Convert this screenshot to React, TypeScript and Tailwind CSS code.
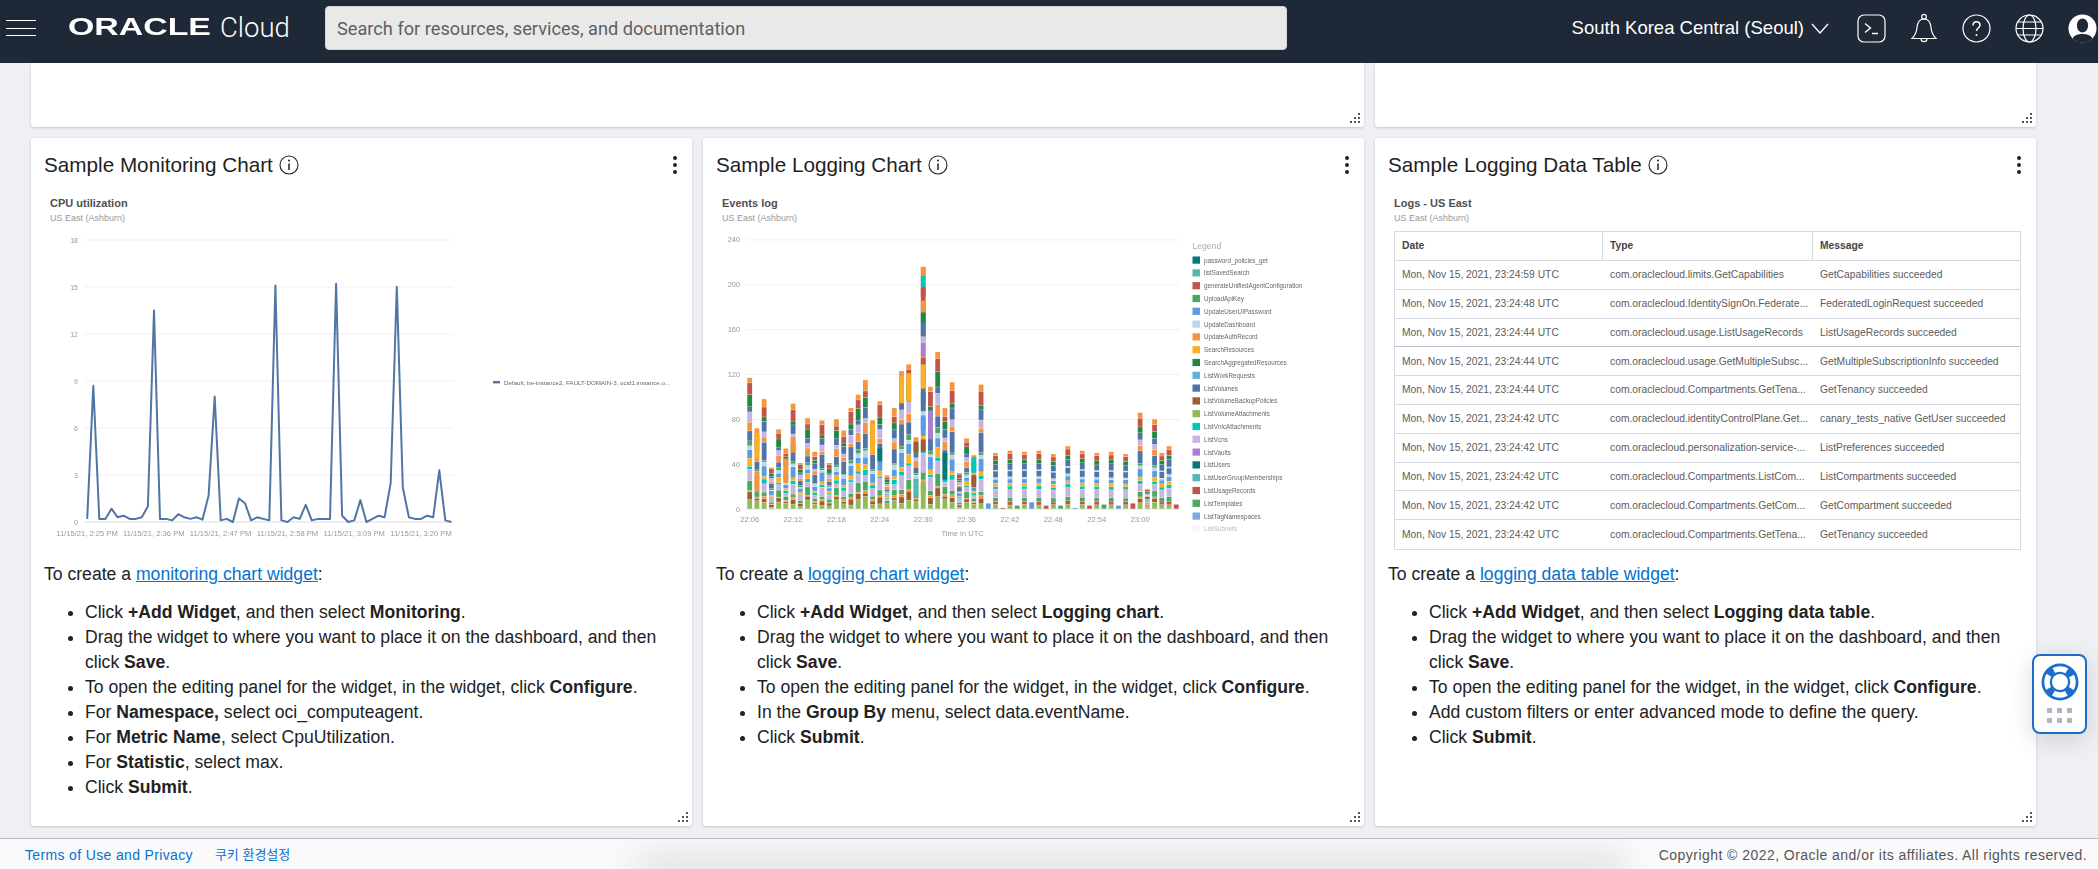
import type { ReactNode } from "react";

const cpu = [
  0.2, 8.7, 0.2, 0.2, 0.85, 0.3, 0.4, 0.2, 0.2, 0.3, 1.0, 13.5, 0.2, 0.2, 0.1, 0.5, 0.3, 0.2, 0.3, 0.15, 1.7,
  8.0, 0.1, 0.2, 0, 1.5, 1.2, 0.1, 0.3, 0.2, 0.1, 15.1, 0.1, 0, 0.3, 0.2, 1.1, 0.1, 0.2, 0.2, 0.2, 15.2, 0.4, 0,
  0.1, 1.4, 0, 0.2, 0.4, 0.3, 2.5, 15, 2.2, 0.3, 0.2, 0.2, 0.4, 0.3, 3.3, 0.1, 0,
];

const c = {
  teal: "#007a72",
  mint: "#55b8ad",
  red: "#c0564a",
  green: "#4aa85f",
  blue: "#5b9be0",
  pale: "#b8d7ec",
  orange: "#f79440",
  amber: "#fdb022",
  forest: "#1f8a3d",
  sky: "#63b2dc",
  steel: "#4f74a8",
  brown: "#a05a34",
  lime: "#90bc58",
  cyan: "#00c8b4",
  lav: "#c8b4e2",
  purple: "#a97fd6",
};

const legend: [string, string][] = [
  ["password_policies_get", c.teal],
  ["listSavedSearch", c.mint],
  ["generateUnifiedAgentConfiguration", c.red],
  ["UploadApiKey", c.green],
  ["UpdateUserUIPassword", c.blue],
  ["UpdateDashboard", c.pale],
  ["UpdateAuthRecord", c.orange],
  ["SearchResources", c.amber],
  ["SearchAggregatedResources", c.forest],
  ["ListWorkRequests", c.sky],
  ["ListVolumes", c.steel],
  ["ListVolumeBackupPolicies", c.brown],
  ["ListVolumeAttachments", c.lime],
  ["ListVnicAttachments", c.cyan],
  ["ListVcns", c.lav],
  ["ListVaults", c.purple],
  ["ListUsers", c.teal],
  ["ListUserGroupMemberships", c.mint],
  ["ListUsageRecords", c.red],
  ["ListTemplates", c.green],
  ["ListTagNamespaces", "#7aa9e3"],
  ["ListSubnets", "#e6f0f9"],
];

const totals = [
  117, 72, 98, 37, 71, 54, 94, 41, 81, 51, 79, 41, 80, 70, 90, 102, 115, 79, 96, 30, 90, 123, 129, 64, 216, 109, 140,
  90, 113, 32, 63, 48, 111, 5, 50, 1, 52, 3, 51, 6, 52, 3, 49, 3, 56, 1, 52, 3, 50, 4, 51, 3, 49, 5, 86, 18, 80, 50,
  56, 4,
];

const busy: [string, number][] = [
  [c.lime, 8],
  [c.brown, 5],
  [c.orange, 2],
  [c.green, 7],
  [c.lav, 9],
  [c.cyan, 4],
  [c.amber, 5],
  [c.blue, 9],
  [c.pale, 4],
  [c.green, 3],
  [c.steel, 14],
  [c.orange, 7],
  [c.lav, 7],
  [c.steel, 8],
  [c.forest, 8],
  [c.red, 10],
  [c.orange, 7],
];

const regular: [string, number][] = [
  [c.lime, 4],
  [c.red, 3],
  [c.green, 4],
  [c.lav, 8],
  [c.cyan, 3],
  [c.amber, 3],
  [c.blue, 4],
  [c.pale, 2],
  [c.steel, 6],
  [c.pale, 1],
  [c.steel, 6],
  [c.forest, 4],
  [c.red, 5],
  [c.orange, 3],
];

// hand picked big blocks: bar, colour, from, to
const overlays: [number, string, number, number][] = [
  [1, c.amber, 45, 68],
  [1, c.orange, 15, 33],
  [5, c.orange, 23, 45],
  [6, c.orange, 50, 64],
  [17, c.amber, 50, 76],
  [18, c.teal, 42, 54],
  [21, c.amber, 94, 118],
  [22, c.amber, 96, 121],
  [23, c.mint, 10, 27],
  [23, c.brown, 50, 60],
  [24, c.orange, 208, 216],
  [24, c.cyan, 198, 208],
  [24, c.red, 189, 197],
  [24, c.orange, 175, 186],
  [24, c.forest, 166, 175],
  [24, c.steel, 154, 166],
  [24, c.lav, 148, 154],
  [24, c.purple, 136, 148],
  [24, c.red, 129, 135],
  [24, c.amber, 107, 129],
  [24, c.steel, 87, 104],
  [24, c.blue, 70, 81],
  [24, c.brown, 51, 62],
  [24, c.lav, 32, 44],
  [24, c.lime, 12, 24],
  [25, c.purple, 62, 88],
  [27, c.teal, 26, 50],
  [31, c.cyan, 32, 46],
  [31, c.brown, 19, 30],
];

function InfoIcon() {
  return (
    <svg width="20" height="20" viewBox="0 0 20 20" fill="none" className="shrink-0">
      <circle cx="10" cy="10" r="9" stroke="#222" strokeWidth="1.1" />
      <circle cx="10" cy="5.6" r="1" fill="#222" />
      <path d="M10 8.4v6.6" stroke="#222" strokeWidth="1.5" />
    </svg>
  );
}

function ResizeHandle() {
  return (
    <svg width="11" height="11" viewBox="0 0 11 11" fill="#555" className="absolute right-[3px] bottom-[3px]">
      <rect x="8" y="0" width="2" height="2" />
      <rect x="8" y="4" width="2" height="2" />
      <rect x="4" y="4" width="2" height="2" />
      <rect x="8" y="8" width="2" height="2" />
      <rect x="4" y="8" width="2" height="2" />
      <rect x="0" y="8" width="2" height="2" />
    </svg>
  );
}

function ChartHead({ title }: { title: string }) {
  return (
    <div className="pt-[4px] pb-[1px] pl-[19px]">
      <div className="text-[11px] leading-[15px] font-bold text-[#4f4f4f]">{title}</div>
      <div className="text-[9px] leading-[14px] text-[#9a9a9a]">US East (Ashburn)</div>
    </div>
  );
}

function CpuChart() {
  const points = cpu.map((v, i) => `${(56.2 + i * 6.07).toFixed(1)},${(296 - v * 15.67).toFixed(1)}`).join(" ");
  const labels = ["2:25", "2:36", "2:47", "2:58", "3:09", "3:20"];
  return (
    <svg width="661" height="330" viewBox="0 0 661 330" className="blur-[0.3px]" fontFamily="Liberation Sans">
      {[18, 15, 12, 9, 6, 3, 0].map((v, i) => (
        <g key={v}>
          <line x1="53" x2="422" y1={14 + i * 47} y2={14 + i * 47} stroke={v === 0 ? "#dddddd" : "#f1f1f1"} />
          <text x="47" y={16.5 + i * 47} fontSize="7" fill="#999" textAnchor="end">
            {v}
          </text>
        </g>
      ))}
      {labels.map((l, i) => (
        <text key={l} x={56 + i * 66.8} y="310" fontSize="7.6" fill="#999" textAnchor="middle">
          11/15/21, {l} PM
        </text>
      ))}
      <polyline points={points} fill="none" stroke="#4f76a5" strokeWidth="2" strokeLinejoin="round" />
      <rect x="462" y="155" width="7" height="2.4" fill="#4f76a5" />
      <text x="473" y="159" fontSize="6.2" fill="#666">
        Default, be-instance2, FAULT-DOMAIN-3, ocid1.instance.o...
      </text>
    </svg>
  );
}

function stack(i: number, total: number) {
  const tpl = i >= 33 && total > 30 && total < 60 ? regular : busy;
  if (total <= 6) {
    const col = [c.blue, c.green, c.red][i % 3];
    return [{ color: col, from: 0, to: total }];
  }
  const w = tpl.map(([, n], j) => n * (1 + (i >= 33 ? 0.1 : 0.45) * Math.sin(i * 1.7 + j * 2.3)));
  const sum = w.reduce((a, b) => a + b, 0);
  let at = 0;
  return tpl.map(([color], j) => {
    const from = at;
    at += (w[j] / sum) * total;
    return { color, from, to: at };
  });
}

function EventsChart() {
  const y = (v: number) => 283 - v * 1.121;
  const barX = (i: number) => 46.7 + i * 7.23;
  return (
    <svg width="661" height="330" viewBox="0 0 661 330" className="blur-[0.3px]" fontFamily="Liberation Sans">
      {[240, 200, 160, 120, 80, 40, 0].map((v) => (
        <g key={v}>
          <line x1="43" x2="477" y1={y(v)} y2={y(v)} stroke={v === 0 ? "#dddddd" : "#f1f1f1"} />
          <text x="37" y={y(v) + 2.5} fontSize="7.4" fill="#999" textAnchor="end">
            {v}
          </text>
        </g>
      ))}
      {totals.map((total, i) => (
        <g key={i}>
          {stack(i, total).map((s, j) => (
            <rect
              key={j}
              x={barX(i) - 2.4}
              y={y(s.to)}
              width="4.8"
              height={Math.max((s.to - s.from) * 1.121 - 0.3, 0.6)}
              fill={s.color}
            />
          ))}
        </g>
      ))}
      {overlays.map(([i, color, from, to], k) => (
        <rect key={k} x={barX(i) - 2.4} y={y(to)} width="4.8" height={(to - from) * 1.121 - 0.3} fill={color} />
      ))}
      {["22:06", "22:12", "22:18", "22:24", "22:30", "22:36", "22:42", "22:48", "22:54", "23:00"].map((l, i) => (
        <text key={l} x={46.7 + i * 43.38} y="296" fontSize="7.6" fill="#999" textAnchor="middle">
          {l}
        </text>
      ))}
      <text x="259.6" y="310" fontSize="7.6" fill="#999" textAnchor="middle">
        Time in UTC
      </text>
      <text x="489.5" y="23" fontSize="8.6" fill="#aaa">
        Legend
      </text>
      {legend.map(([name, color], i) => (
        <g key={name} opacity={i === 21 ? 0.45 : 1}>
          <rect x="489.5" y={30.5 + i * 12.8} width="7.5" height="7.2" fill={color} />
          <text x="501" y={36.6 + i * 12.8} fontSize="6.3" fill="#666">
            {name}
          </text>
        </g>
      ))}
    </svg>
  );
}

const logRows = [
  ["Mon, Nov 15, 2021, 23:24:59 UTC", "com.oraclecloud.limits.GetCapabilities", "GetCapabilities succeeded"],
  ["Mon, Nov 15, 2021, 23:24:48 UTC", "com.oraclecloud.IdentitySignOn.Federate...", "FederatedLoginRequest succeeded"],
  ["Mon, Nov 15, 2021, 23:24:44 UTC", "com.oraclecloud.usage.ListUsageRecords", "ListUsageRecords succeeded"],
  ["Mon, Nov 15, 2021, 23:24:44 UTC", "com.oraclecloud.usage.GetMultipleSubsc...", "GetMultipleSubscriptionInfo succeeded"],
  ["Mon, Nov 15, 2021, 23:24:44 UTC", "com.oraclecloud.Compartments.GetTena...", "GetTenancy succeeded"],
  ["Mon, Nov 15, 2021, 23:24:42 UTC", "com.oraclecloud.identityControlPlane.Get...", "canary_tests_native GetUser succeeded"],
  ["Mon, Nov 15, 2021, 23:24:42 UTC", "com.oraclecloud.personalization-service-...", "ListPreferences succeeded"],
  ["Mon, Nov 15, 2021, 23:24:42 UTC", "com.oraclecloud.Compartments.ListCom...", "ListCompartments succeeded"],
  ["Mon, Nov 15, 2021, 23:24:42 UTC", "com.oraclecloud.Compartments.GetCom...", "GetCompartment succeeded"],
  ["Mon, Nov 15, 2021, 23:24:42 UTC", "com.oraclecloud.Compartments.GetTena...", "GetTenancy succeeded"],
];

function LogsTable() {
  return (
    <div className="mt-[5px] mr-[15px] ml-[19px] border border-[#d5dae3] text-[10.3px] text-[#5c5c5c]">
      <div className="grid h-[29px] grid-cols-[208px_210px_1fr] items-center border-b border-[#d5dae3] font-bold text-[#444]">
        <div className="flex h-full items-center border-r border-[#d5dae3] pl-[7px]">Date</div>
        <div className="flex h-full items-center border-r border-[#d5dae3] pl-[7px]">Type</div>
        <div className="pl-[7px]">Message</div>
      </div>
      {logRows.map((row, i) => (
        <div
          key={i}
          className={`grid h-[28.8px] grid-cols-[208px_210px_1fr] items-center whitespace-nowrap ${
            i === 9 ? "" : i === 2 ? "border-b border-[#b9c0cf]" : "border-b border-[#d5dae3]"
          }`}
        >
          {row.map((cell) => (
            <div key={cell} className="pl-[7px]">
              {cell}
            </div>
          ))}
        </div>
      ))}
    </div>
  );
}

const open = "To open the editing panel for the widget, in the widget, click ";
const drag = "Drag the widget to where you want to place it on the dashboard, and then click ";

interface CardProps {
  title: string;
  chart: ReactNode;
  link: string;
  items: ReactNode[];
}

function WidgetCard({ title, chart, link, items }: CardProps) {
  return (
    <section className="relative h-[688px] rounded-[3px] bg-white shadow-[0_1px_3px_rgba(0,0,0,0.18)]">
      <div className="flex h-[54px] items-center gap-[6px] pr-[14px] pl-[13px]">
        <h2 className="text-[20.7px] leading-none font-normal text-[#1f1f1f]">{title}</h2>
        <InfoIcon />
        <svg width="6" height="20" viewBox="0 0 6 20" fill="#222" className="ml-auto">
          <circle cx="3" cy="3" r="2" />
          <circle cx="3" cy="10" r="2" />
          <circle cx="3" cy="17" r="2" />
        </svg>
      </div>
      <div className="h-[370px] overflow-hidden">{chart}</div>
      <div className="px-[13px] text-[17.6px] leading-[25px] text-[#222]">
        <p>
          To create a <a className="text-[#0572ce] underline">{link}</a>:
        </p>
        <ul className="mt-[13px] list-disc pl-[41px]">
          {items.map((item, i) => (
            <li key={i}>{item}</li>
          ))}
        </ul>
      </div>
      <ResizeHandle />
    </section>
  );
}

function HeaderIcons() {
  return (
    <div className="ml-[28px] flex items-center gap-[24px] pr-[1px] text-white">
      <svg width="29" height="29" viewBox="0 0 29 29" fill="none" stroke="currentColor" strokeWidth="1.2">
        <rect x="1" y="1" width="27" height="27" rx="6" />
        <path d="M8 9.5l5.5 4.5-5.5 4.5M15 19.5h6" strokeWidth="1.4" />
      </svg>
      <svg width="28" height="30" viewBox="0 0 28 30" fill="none" stroke="currentColor" strokeWidth="1.2">
        <path d="M2 25.5c3-3 4.500-6 5-11C7.500 9 10 6 14 6s6.500 3 7 8.500c.5 5 2 8 5 11z" />
        <circle cx="14" cy="3.700" r="2.300" />
        <path d="M11 25.700a3 3 0 0 0 6 0" />
      </svg>
      <svg width="29" height="29" viewBox="0 0 29 29" fill="none" stroke="currentColor" strokeWidth="1.200">
        <circle cx="14.500" cy="14.500" r="13.500" />
        <path d="M11 11.500c0-2.500 1.500-3.800 3.500-3.800s3.500 1.300 3.500 3.300c0 3-3.500 3-3.500 6" strokeWidth="1.500" />
        <circle cx="14.500" cy="21" r="1" fill="currentColor" stroke="none" />
      </svg>
      <svg width="29" height="29" viewBox="0 0 29 29" fill="none" stroke="currentColor" strokeWidth="1.200">
        <circle cx="14.500" cy="14.500" r="13.500" />
        <ellipse cx="14.500" cy="14.500" rx="6.500" ry="13.500" />
        <path d="M1 14.500h27M3 8h23M3 21h23" />
      </svg>
      <svg width="29" height="29" viewBox="0 0 29 29">
        <circle cx="14.500" cy="14.500" r="14" fill="#fff" />
        <ellipse cx="14.500" cy="11.500" rx="5.600" ry="7" fill="#1e2836" />
        <path d="M4.500 24.500c2-3.500 5.500-4.500 10-4.500s8 1 10 4.500a14 14 0 0 1-20 0z" fill="#1e2836" />
      </svg>
    </div>
  );
}

function HelpWidget() {
  return (
    <div className="absolute top-[654px] left-[2032px] flex h-[80px] w-[55px] flex-col items-center rounded-[8px] border-2 border-[#1b6fcb] bg-white pt-[7px] shadow-[0_6px_24px_rgba(0,0,0,0.14)]">
      <svg width="38" height="38" viewBox="0 0 38 38">
        <circle cx="19" cy="19" r="18.500" fill="#1b6fcb" />
        <circle cx="19" cy="19" r="13" fill="none" stroke="#fff" strokeWidth="5.600" strokeDasharray="13.600 6.820" strokeDashoffset="6.800" />
        <circle cx="19" cy="19" r="8" fill="#fff" />
      </svg>
      <div className="mt-[7px] grid grid-cols-3 gap-x-[5px] gap-y-[5px]">
        {[0, 1, 2, 3, 4, 5].map((n) => (
          <div key={n} className="h-[5px] w-[5px] bg-[#b0b7bf]" />
        ))}
      </div>
    </div>
  );
}

export default function App() {
  return (
    <div className="relative flex h-[869px] flex-col overflow-hidden bg-[#eef0f4] font-['Liberation_Sans',sans-serif]">
      <header className="flex h-[63px] shrink-0 items-center bg-[#1e2836] pb-[7px] text-white">
        <div className="ml-[6px] flex w-[30px] flex-col gap-[6.500px]">
          <div className="h-px bg-white" />
          <div className="h-px bg-white" />
          <div className="h-px bg-white" />
        </div>
        <div className="ml-[32px] w-[143px]">
          <span className="inline-block origin-left scale-x-[1.41] text-[24px] leading-none font-bold">ORACLE</span>
        </div>
        <span className="ml-[9px] w-[105px] font-['Roboto',sans-serif] text-[27.5px] leading-none font-light">Cloud</span>
        <input
          readOnly
          placeholder="Search for resources, services, and documentation"
          className="h-[44px] w-[962px] rounded-[4px] border border-[#d5d5d5] bg-[#e9e9e9] pl-[11px] font-['Roboto',sans-serif] text-[18.2px] placeholder:text-[#5f5f5f]"
        />
        <div className="ml-auto flex items-center gap-[7px]">
          <span className="text-[18.500px]">South Korea Central (Seoul)</span>
          <svg width="18" height="11" viewBox="0 0 18 11" fill="none" stroke="#fff" strokeWidth="1.300">
            <path d="M1 1l8 9 8-9" />
          </svg>
        </div>
        <HeaderIcons />
      </header>

      <main className="min-h-0 flex-1 pr-[62px] pl-[31px]">
        <div className="grid grid-cols-3 gap-[11px]">
          <div className="relative col-span-2 h-[64px] rounded-b-[3px] bg-white shadow-[0_1px_3px_rgba(0,0,0,0.18)]">
            <ResizeHandle />
          </div>
          <div className="relative h-[64px] rounded-b-[3px] bg-white shadow-[0_1px_3px_rgba(0,0,0,0.18)]">
            <ResizeHandle />
          </div>
          <WidgetCard
            title="Sample Monitoring Chart"
            link="monitoring chart widget"
            chart={
              <>
                <ChartHead title="CPU utilization" />
                <CpuChart />
              </>
            }
            items={[
              <>
                Click <b>+Add Widget</b>, and then select <b>Monitoring</b>.
              </>,
              <>
                {drag}
                <b>Save</b>.
              </>,
              <>
                {open}
                <b>Configure</b>.
              </>,
              <>
                For <b>Namespace,</b> select oci_computeagent.
              </>,
              <>
                For <b>Metric Name</b>, select CpuUtilization.
              </>,
              <>
                For <b>Statistic</b>, select max.
              </>,
              <>
                Click <b>Submit</b>.
              </>,
            ]}
          />
          <WidgetCard
            title="Sample Logging Chart"
            link="logging chart widget"
            chart={
              <>
                <ChartHead title="Events log" />
                <EventsChart />
              </>
            }
            items={[
              <>
                Click <b>+Add Widget</b>, and then select <b>Logging chart</b>.
              </>,
              <>
                {drag}
                <b>Save</b>.
              </>,
              <>
                {open}
                <b>Configure</b>.
              </>,
              <>
                In the <b>Group By</b> menu, select data.eventName.
              </>,
              <>
                Click <b>Submit</b>.
              </>,
            ]}
          />
          <WidgetCard
            title="Sample Logging Data Table"
            link="logging data table widget"
            chart={
              <>
                <ChartHead title="Logs - US East" />
                <LogsTable />
              </>
            }
            items={[
              <>
                Click <b>+Add Widget</b>, and then select <b>Logging data table</b>.
              </>,
              <>
                {drag}
                <b>Save</b>.
              </>,
              <>
                {open}
                <b>Configure</b>.
              </>,
              <>Add custom filters or enter advanced mode to define the query.</>,
              <>
                Click <b>Submit</b>.
              </>,
            ]}
          />
        </div>
      </main>

      <footer className="relative flex h-[31px] shrink-0 items-center overflow-hidden border-t border-[#b6bac4] bg-[#fafafb] pt-[2px] pr-[11px] pl-[25px] text-[14px] tracking-[0.35px]">
        <a className="text-[#0572ce]">Terms of Use and Privacy</a>
        <a className="ml-[22px] font-['Liberation_Sans','Noto_Sans_CJK_KR',sans-serif] text-[13px] tracking-normal text-[#0572ce]">쿠키 환경설정</a>
        <span className="ml-auto tracking-[0.45px] text-[#555]">Copyright © 2022, Oracle and/or its affiliates. All rights reserved.</span>
        <div className="absolute bottom-0 left-[650px] h-0 w-[960px] shadow-[0_0_34px_16px_rgba(0,0,0,0.1)]" />
      </footer>

      <HelpWidget />
    </div>
  );
}
